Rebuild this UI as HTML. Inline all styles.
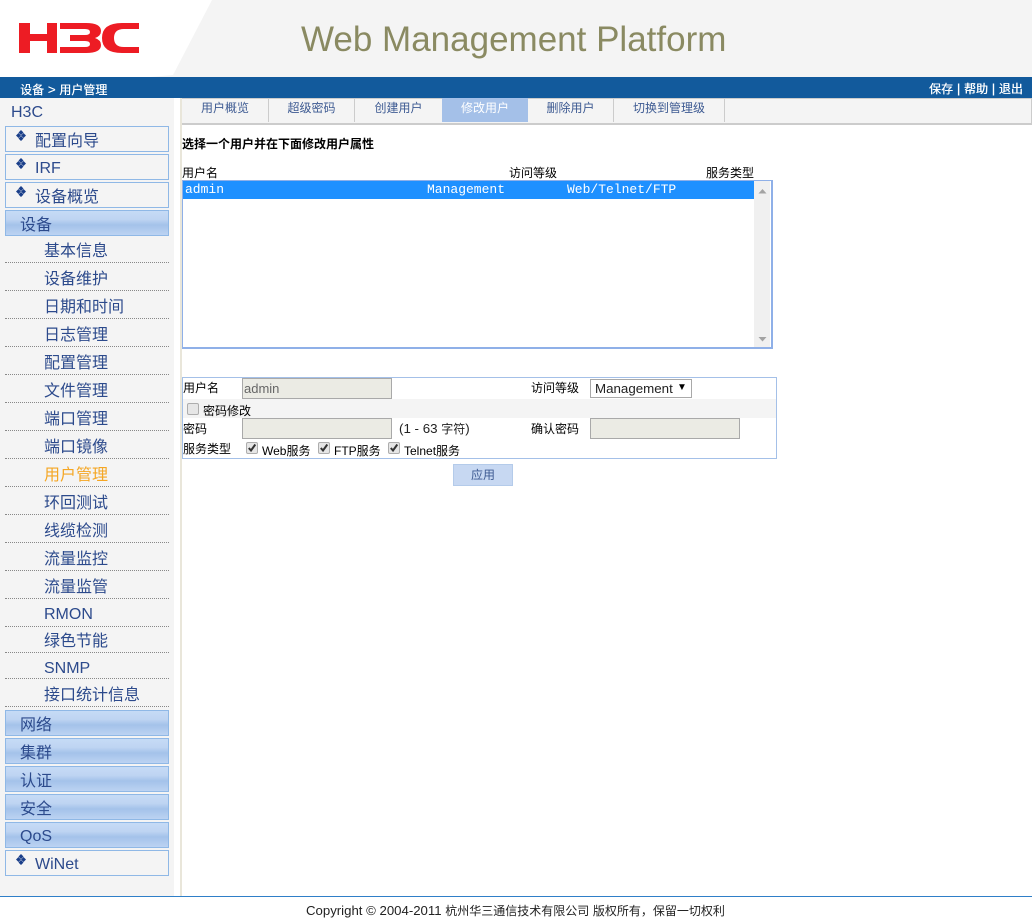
<!DOCTYPE html>
<html><head><meta charset="utf-8"><title>Web Management Platform</title>
<style>
html,body{margin:0;padding:0;background:#fff}
body{position:relative;width:1032px;height:923px;overflow:hidden;font-family:"Liberation Sans","Noto Sans CJK SC",sans-serif;font-size:12px;color:#000}
.a,.n,.s,.t,.l,.c{position:absolute}
.a{white-space:nowrap}
.n{left:5px;width:162px;height:24px;border:1px solid #8fb8e6;font-size:16px;line-height:30px;color:#2c4a8c;white-space:nowrap}
.n.g{background:linear-gradient(#c6dbf6 0,#bed4f2 35%,#a4c2ea 58%,#bcd3f2 100%);padding-left:14px;width:148px}
.n.b{padding-left:29px;width:133px;background:#f4f4f4}
.n svg{position:absolute;left:10px;top:3px}
.s{left:5px;width:164px;border-bottom:1px dotted #888;font-size:16px;color:#2c4a8c;text-indent:39px;white-space:nowrap;line-height:30px}
.t{top:98px;height:24px;line-height:20px;text-align:center;color:#3d5a92;border-right:1px solid #ccc;font-size:12px;box-sizing:border-box}
.l{font-size:12px;line-height:16px;white-space:nowrap}
.i{position:absolute;background:#ebebe4;border:1px solid #a9a9a9;box-sizing:border-box;color:#666;font-size:13px;line-height:19px;padding-left:1px}
.c{width:12px;height:12px;box-sizing:border-box;background:#e6e6e6;border:1px solid #adadad;border-radius:2px}
.c svg{position:absolute;left:0;top:0}
.w{font-size:13.33px}
.d{position:relative;top:1px}
</style></head><body>
<div class="a" style="left:0;top:0;width:1032px;height:77px;background:#f4f4f4"></div>
<svg class="a" style="left:0;top:0" width="300" height="77"><polygon points="0,0 212,0 173,75 150,77 0,77" fill="#fff"/>
<g fill="#ed1c24"><path d="M19 23H30V34H47V23H57V53H47V41H30V53H19Z"/><path d="M60 23H86Q101 23 101 31Q101 36 95 38Q101 40 101 45Q101 53 86 53H60V47H85Q90 47 90 44Q90 41 85 41H70V35H85Q90 35 90 32Q90 29 85 29H60Z"/><path d="M139 23V29H124Q114 29 114 38Q114 47 124 47H139V53H122Q102 53 102 38Q102 23 122 23Z"/></g></svg>
<div class="a" style="left:301px;top:20px;font-size:35px;line-height:40px;color:#8a8a62">Web Management Platform</div>
<div class="a" style="left:0;top:77px;width:1032px;height:21px;background:#125a9c"></div>
<div class="a" style="left:20px;top:82px;color:#fff;font-size:12px;line-height:15px;text-shadow:.3px 0 #fff">设备<span class="w"> &gt; </span>用户管理</div>
<div class="a" style="left:929px;top:81px;color:#fff;font-size:12px;line-height:15px;text-shadow:.3px 0 #fff">保存<span class="w"> | </span>帮助<span class="w"> | </span>退出</div>

<div class="a" style="left:0;top:98px;width:174px;height:798px;background:#f4f4f4"></div>
<div class="a" style="left:180px;top:98px;width:2px;height:798px;background:#e9e6da"></div>
<div class="a" style="left:11px;top:104px;font-size:16px;line-height:18px;color:#2c4a8c">H3C</div>

<div class="n b" style="top:126px"><svg width="12" height="12" fill="#1a3f8a"><path d="M5 0l2.500 2.500-2.500 2.500-2.500-2.500zM2.500 3l2.500 2.500-2.500 2.500-2.500-2.500zM7.500 3l2.500 2.500-2.500 2.500-2.500-2.500zM5 6l2.500 2.500-2.500 2.500-2.500-2.500z"/></svg>配置向导</div>
<div class="n b" style="top:154px;line-height:26px"><svg width="12" height="12" fill="#1a3f8a"><path d="M5 0l2.500 2.500-2.500 2.500-2.500-2.500zM2.500 3l2.500 2.500-2.500 2.500-2.500-2.500zM7.500 3l2.500 2.500-2.500 2.500-2.500-2.500zM5 6l2.500 2.500-2.500 2.500-2.500-2.500z"/></svg><span class="d">IRF</span></div>
<div class="n b" style="top:182px"><svg width="12" height="12" fill="#1a3f8a"><path d="M5 0l2.500 2.500-2.500 2.500-2.500-2.500zM2.500 3l2.500 2.500-2.500 2.500-2.500-2.500zM7.500 3l2.500 2.500-2.500 2.500-2.500-2.500zM5 6l2.500 2.500-2.500 2.500-2.500-2.500z"/></svg>设备概览</div>
<div class="n g" style="top:210px">设备</div>

<div class="s" style="top:237px;height:25px">基本信息</div>
<div class="s" style="top:265px;height:25px">设备维护</div>
<div class="s" style="top:293px;height:25px">日期和时间</div>
<div class="s" style="top:321px;height:25px">日志管理</div>
<div class="s" style="top:349px;height:25px">配置管理</div>
<div class="s" style="top:377px;height:25px">文件管理</div>
<div class="s" style="top:405px;height:25px">端口管理</div>
<div class="s" style="top:433px;height:25px">端口镜像</div>
<div class="s" style="top:461px;height:25px;color:#f5a623">用户管理</div>
<div class="s" style="top:489px;height:25px">环回测试</div>
<div class="s" style="top:517px;height:25px">线缆检测</div>
<div class="s" style="top:545px;height:25px">流量监控</div>
<div class="s" style="top:573px;height:25px">流量监管</div>
<div class="s" style="top:601px;height:25px;line-height:26px"><span class="d">RMON</span></div>
<div class="s" style="top:627px;height:25px">绿色节能</div>
<div class="s" style="top:655px;height:23px;line-height:26px"><span class="d">SNMP</span></div>
<div class="s" style="top:681px;height:25px">接口统计信息</div>

<div class="n g" style="top:710px">网络</div>
<div class="n g" style="top:738px">集群</div>
<div class="n g" style="top:766px">认证</div>
<div class="n g" style="top:794px">安全</div>
<div class="n g" style="top:822px;line-height:26px"><span class="d">QoS</span></div>
<div class="n b" style="top:850px;line-height:26px"><svg width="12" height="12" fill="#1a3f8a"><path d="M5 0l2.500 2.500-2.500 2.500-2.500-2.500zM2.500 3l2.500 2.500-2.500 2.500-2.500-2.500zM7.500 3l2.500 2.500-2.500 2.500-2.500-2.500zM5 6l2.500 2.500-2.500 2.500-2.500-2.500z"/></svg><span class="d">WiNet</span></div>

<div class="a" style="left:182px;top:98px;width:850px;height:27px;background:#f4f4f4;border-top:1px solid #ccc;border-bottom:2px solid #ccc;box-sizing:border-box"></div>
<div class="a" style="left:1031px;top:98px;width:1px;height:27px;background:#ccc"></div>
<div class="t" style="left:182px;width:87px">用户概览</div>
<div class="t" style="left:269px;width:86px">超级密码</div>
<div class="t" style="left:355px;width:87px;border-right:0">创建用户</div>
<div class="t" style="left:442px;width:86px;background:#a4c0e8;color:#fff;border-right:0">修改用户</div>
<div class="t" style="left:528px;width:86px">删除用户</div>
<div class="t" style="left:614px;width:111px">切换到管理级</div>

<div class="a" style="left:182px;top:136px;font-size:12px;line-height:16px;font-weight:bold">选择一个用户并在下面修改用户属性</div>
<div class="l" style="left:182px;top:165px">用户名</div>
<div class="l" style="left:509px;top:165px">访问等级</div>
<div class="l" style="left:706px;top:165px">服务类型</div>

<div class="a" style="left:182px;top:180px;width:588px;height:166px;border:1px solid #8fb0e8;border-right-width:2px;border-bottom-width:2px;background:#fff"></div>
<div class="a" style="left:183px;top:181px;width:571px;height:18px;background:#1e90ff;color:#fff;font-family:'Liberation Mono',monospace;font-size:13px;line-height:18px"><span class="a" style="left:2px;top:0">admin</span><span class="a" style="left:244px;top:0">Management</span><span class="a" style="left:384px;top:0">Web/Telnet/FTP</span></div>
<div class="a" style="left:754px;top:181px;width:16px;height:166px;background:#f0f0f0"></div>
<svg class="a" style="left:754px;top:182px" width="17" height="165" fill="#a3a3a3"><path d="M4.500 11.500L8.500 7 12.500 11.500Z"/><path d="M4.500 155L8.500 159.500 12.500 155Z"/></svg>

<div class="a" style="left:182px;top:377px;width:593px;height:80px;border:1px solid #a4c0e8"></div>
<div class="a" style="left:183px;top:399px;width:593px;height:19px;background:#f4f4f4"></div>
<div class="l" style="left:183px;top:380px">用户名</div>
<div class="i" style="left:242px;top:378px;width:150px;height:21px">admin</div>
<div class="l" style="left:531px;top:380px">访问等级</div>
<div class="a" style="left:590px;top:379px;width:102px;height:19px;border:1px solid #a9a9a9;box-sizing:border-box;background:#fff;font-size:13.33px;line-height:17px;padding-left:4px;color:#222">Management<span class="a" style="left:86px;top:1px;font-size:10px;line-height:14px;color:#000">▼</span></div>
<div class="c" style="left:187px;top:403px"></div>
<div class="l" style="left:203px;top:403px">密码修改</div>
<div class="l" style="left:183px;top:421px">密码</div>
<div class="i" style="left:242px;top:418px;width:150px;height:21px"></div>
<div class="l" style="left:399px;top:421px;color:#222"><span class="w">(1 - 63 </span>字符<span class="w">)</span></div>
<div class="l" style="left:531px;top:421px">确认密码</div>
<div class="i" style="left:590px;top:418px;width:150px;height:21px"></div>
<div class="l" style="left:183px;top:441px">服务类型</div>
<div class="c" style="left:246px;top:442px"><svg width="10" height="10"><path d="M1.800 5l2.200 2.500L8.300 1.500" fill="none" stroke="#333" stroke-width="2"/></svg></div>
<div class="l" style="left:262px;top:443px">Web服务</div>
<div class="c" style="left:318px;top:442px"><svg width="10" height="10"><path d="M1.800 5l2.200 2.500L8.300 1.500" fill="none" stroke="#333" stroke-width="2"/></svg></div>
<div class="l" style="left:334px;top:443px">FTP服务</div>
<div class="c" style="left:388px;top:442px"><svg width="10" height="10"><path d="M1.800 5l2.200 2.500L8.300 1.500" fill="none" stroke="#333" stroke-width="2"/></svg></div>
<div class="l" style="left:404px;top:443px">Telnet服务</div>
<div class="a" style="left:453px;top:464px;width:60px;height:22px;background:#c7d8f2;border:1px solid #b4cbea;box-sizing:border-box;text-align:center;font-size:12px;line-height:20px;color:#3d5a92">应用</div>

<div class="a" style="left:0;top:896px;width:1032px;height:1px;background:#2f7fc8"></div>
<div class="a" style="left:306px;top:902px;font-size:12px;line-height:17px;color:#222"><span style="font-size:13.2px">Copyright © 2004-2011 </span>杭州华三通信技术有限公司<span style="font-size:13.2px"> </span>版权所有，保留一切权利</div>
</body></html>
